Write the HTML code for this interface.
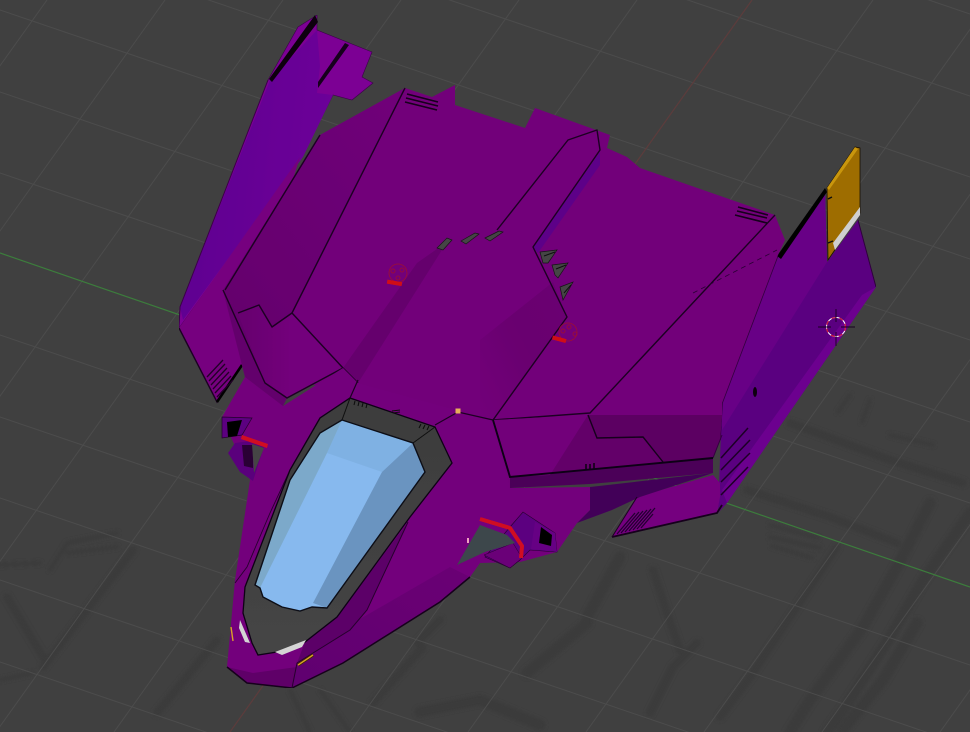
<!DOCTYPE html>
<html><head><meta charset="utf-8"><style>html,body{margin:0;padding:0;background:#404040}svg{display:block}</style></head><body>
<svg width="970" height="732" viewBox="0 0 970 732" xmlns="http://www.w3.org/2000/svg">
<defs>
<filter id="b" x="-5%" y="-5%" width="110%" height="110%"><feGaussianBlur stdDeviation="1.8"/></filter>
<filter id="s" x="0" y="0" width="100%" height="100%"><feGaussianBlur stdDeviation=".35"/></filter>
<linearGradient id="fin" x1="0" y1="0" x2="1" y2="0.2"><stop offset="0" stop-color="#5d0090"/><stop offset="1" stop-color="#6c0098"/></linearGradient>
<linearGradient id="pan" x1="0" y1="1" x2="1" y2="0"><stop offset="0" stop-color="#64006c"/><stop offset="1" stop-color="#70007a"/></linearGradient>
<linearGradient id="sub" x1="0" y1="0" x2="1" y2="0"><stop offset="0" stop-color="#66006e"/><stop offset=".5" stop-color="#73007b"/></linearGradient>
<linearGradient id="mid" x1="0" y1="1" x2="1" y2="0.2"><stop offset="0" stop-color="#72007a"/><stop offset=".6" stop-color="#69006f"/><stop offset="1" stop-color="#6a0072"/></linearGradient>
<linearGradient id="fr" x1="0" y1="0" x2="0" y2="1"><stop offset="0" stop-color="#3c3c3c"/><stop offset="1" stop-color="#454545"/></linearGradient>
<linearGradient id="low" x1="1" y1="0" x2="0" y2="1"><stop offset="0" stop-color="#6a0074"/><stop offset="1" stop-color="#600070"/></linearGradient>
</defs>
<rect width="970" height="732" fill="#404040"/>
<!-- floor marks -->
<g filter="url(#b)" fill="none" stroke="#3a3a3a" stroke-linecap="round" stroke-linejoin="round">
<g stroke-width="8"><polyline points="790,423 890,460 963,483"/><polyline points="747,490 830,517 897,543"/><polyline points="837,547 797,607 753,673 720,717"/><polyline points="653,570 667,613 680,650"/><polyline points="697,643 673,667 650,713"/><polyline points="133,550 43,667"/><polyline points="7,597 43,657"/><polyline points="217,640 157,713"/><polyline points="423,647 373,703"/><polyline points="440,620 417,643"/></g>
<g stroke-width="11"><polyline points="930,503 897,567 863,627 810,700 790,732"/><polyline points="970,513 923,580 890,637 843,710 827,732"/><polyline points="917,623 883,680 843,730"/><polyline points="587,623 527,673"/><polyline points="620,557 587,617"/><polyline points="420,712 480,700 540,725"/></g>
<g stroke-width="4"><polyline points="770,525 818,538"/><polyline points="770,537 820,548"/><polyline points="772,546 812,558"/><polyline points="890,435 933,445"/><polyline points="850,395 838,412"/><polyline points="870,400 862,422"/><polyline points="50,570 67,543 117,533"/><polyline points="67,553 117,547"/><polyline points="0,680 33,673"/><polyline points="0,565 40,563"/><polyline points="290,690 310,732"/><polyline points="320,690 350,732"/></g>
</g>
<!-- grid -->
<g stroke="#4c4c4c" stroke-width="1" fill="none">
<path d="M0-316L970 14M0-234L970 96M0-153L970 177M0-71L970 259M0 10L970 340M0 92L970 422M0 173L970 503M0 335L970 665M0 417L970 747M0 498L970 828M0 580L970 910M0 662L970 992"/>
<path d="M47 0L-476 732M165 0L-358 732M283 0L-240 732M401 0L-122 732M519 0L-4 732M637 0L114 732M873 0L350 732M991 0L468 732M1109 0L586 732M1227 0L704 732M1345 0L822 732M1463 0L940 732"/>
</g>
<path d="M0 253L970 587" stroke="#3c7d3c" stroke-width="1.2"/>
<path d="M752 0L230 732" stroke="#5c3c3c" stroke-width="1.2"/>

<g filter="url(#s)">
<!-- left fin -->
<polygon points="298,27 317,15 317,30 372,52 362,77 373,83 352,100 333,95 300,160 179,328 180,307 268,80" fill="#7c0094" stroke="#3a0048" stroke-width=".6"/>
<polygon points="270,80 317,30 320,66 317,93 333,95 303,157 183,320 180,307" fill="url(#fin)"/>
<polygon points="315,15 318,22 272,82 269,79" fill="#0a0010"/>
<polygon points="345,43 349,45 318,88 318,82" fill="#12001c"/>
<polyline points="268,80 180,307 179,328" fill="none" stroke="#3a0048" stroke-width="1"/>
<polygon points="179,328 300,157 255,300 242,365 217,402" fill="#76007f"/>
<polyline points="179,328 217,402 242,365" fill="none" stroke="#1c0024" stroke-width="1.4"/>
<polyline points="217,402 242,365" fill="none" stroke="#000" stroke-width="2.6"/>
<path d="M207 377L223 360M209 381L225 364M211 385L227 368M213 389L229 372M215 393L231 376M217 397L233 380" stroke="#200028" stroke-width="1.3"/>
<!-- right fin -->
<polygon points="778,255 825,190 827,262 858,220 876,287 727,503 718,513 722,403" fill="#5a0080"/>
<polygon points="778,255 825,190 827,262 722,430 722,403" fill="#680086"/>
<polygon points="876,287 862,295 722,490 727,503" fill="#6c008f"/>
<polyline points="858,220 876,287" stroke="#2e003c" stroke-width="1" fill="none"/>
<polyline points="778,255 722,403 720,440" stroke="#33003f" stroke-width="1.6" fill="none"/>
<ellipse cx="755" cy="392" rx="2" ry="5" fill="#0a0010"/>
<polygon points="777,256 825,188 827,192 781,259" fill="#040006"/>
<!-- gold -->
<polygon points="827,188 855,147 860,148 860,213 828,260" fill="#9e6d00" stroke="#1a1000" stroke-width=".8"/>
<polygon points="827,188 855,147 858,149 829,190" fill="#c9960a"/>
<polygon points="833,243 860,207 860,215 835,250" fill="#cfcfcf"/>
<path d="M828 199L832 197M828 243L833 241" stroke="#111" stroke-width="1.4"/>
<!-- main body -->
<polygon points="320,135 405,88 432,97 455,85 455,105 525,128 535,108 610,135 607,148 627,157 640,168 775,215 785,240 778,255 722,403 722,415 720,440 713,458 510,488 358,390 245,377 223,292" fill="#72007a"/>
<polygon points="320,135 405,88 292,313 272,327 259,305 238,313 223,290" fill="url(#pan)"/>
<polygon points="223,290 238,313 265,383 287,398 283,406 250,392 245,377" fill="#64006c"/>
<polygon points="238,313 259,305 272,327 292,313 343,368 287,398 265,383" fill="url(#sub)"/>
<polygon points="447,242 417,263 343,368 358,383" fill="#65006d"/>
<polygon points="480,340 553,282 567,317 493,420 480,420" fill="url(#mid)"/>
<polygon points="600,152 533,247 538,253 600,165" fill="#5d0088"/>
<!-- spine vents -->
<g fill="#454545" stroke="#151515" stroke-width=".7">
<polygon points="540,252 557,250 548,263 543,263"/><polygon points="552,265 568,263 558,278 555,275"/><polygon points="560,287 573,282 563,300"/>
<polygon points="437,248 447,238 452,240 443,250"/><polygon points="461,241 475,233 479,234 466,244"/><polygon points="485,238 499,231 503,232 490,241"/>
</g>
<path d="M544 256L555 252M556 269L566 265M564 293L571 285" stroke="#111" stroke-width="1"/>
<!-- lines on main -->
<g fill="none" stroke="#1c0022" stroke-width="1.4" stroke-linejoin="round">
<polyline points="405,88 292,313 343,368 358,383"/>
<polyline points="343,368 287,398 265,383 223,290"/>
<polyline points="238,313 259,305 272,327 292,313"/>
<polyline points="497,230 568,140 597,130 600,150 533,247 567,317 493,420"/>
<polyline points="320,135 225,290"/>
<polyline points="775,215 590,413 493,420"/>
</g>
<path d="M693 293L777 250" stroke="#2a0034" stroke-width=".8" stroke-dasharray="5 4"/>
<path d="M407 94L438 102M406 98L438 106M405 102L437 110" stroke="#14001a" stroke-width="1.6"/>
<path d="M738 207L768 215M737 211L767 218M735 215L767 223" stroke="#14001a" stroke-width="1.6"/>
<!-- marks -->
<g fill="none" stroke="#a01030" stroke-width=".8"><circle cx="398" cy="273" r="9"/><circle cx="393" cy="271" r="2"/><circle cx="402" cy="270" r="2"/><circle cx="398" cy="278" r="2"/><circle cx="568" cy="332" r="9"/><circle cx="563" cy="331" r="2"/><circle cx="575" cy="334" r="2"/><circle cx="569" cy="327" r="2"/></g>
<rect x="387" y="281" width="15" height="4" fill="#d01018" transform="rotate(10 395 283)"/>
<rect x="552" y="337" width="14" height="4" fill="#d01018" transform="rotate(15 558 340)"/>
<!-- rear right -->
<polygon points="588,415 722,415 720,440 713,458 663,462 643,437 597,438" fill="#5b0062"/>
<polygon points="588,415 597,438 643,437 663,462 547,475" fill="#630069"/>
<polygon points="612,537 637,497 713,475 720,483 720,497 717,513" fill="#75007f"/>
<polygon points="590,487 590,510 577,523 612,510 640,497 713,473" fill="#430059"/>
<polygon points="510,477 713,458 713,473 590,484 510,488" fill="#4b0058"/>
<polyline points="612,537 717,513 722,505" fill="none" stroke="#14001a" stroke-width="1.8"/>
<polyline points="612,537 637,497" fill="none" stroke="#1a0022" stroke-width="1"/>
<path d="M617 534L635 513M621 533L639 512M625 532L643 511M629 531L647 510M633 530L651 509M637 529L655 508M641 528L653 514" stroke="#240030" stroke-width="1.3"/>
<path d="M721 458L748 428M721 470L750 440M721 482L750 453M721 495L748 467" stroke="#1c0026" stroke-width="1.5"/>
<polyline points="713,458 722,435" stroke="#33003f" stroke-width="1" fill="none"/>
<!-- nose base -->
<polygon points="222,417 245,377 283,406 343,368 358,383 493,420 510,488 590,487 590,510 577,523 557,552 520,562 480,563 470,577 440,602 343,663 292,688 247,683 227,667 235,580 250,480" fill="#73007b"/>
<polygon points="450,567 470,577 440,602 343,663 292,688 293,670 353,623" fill="url(#low)"/>
<polygon points="408,522 337,617 305,642 297,663 350,630 367,610" fill="#5c0068"/>
<polygon points="227,667 247,683 292,688 297,667 253,673" fill="#5f0068"/>
<polyline points="227,667 247,683 292,688 343,663 440,602 470,577" fill="none" stroke="#14001a" stroke-width="1.5"/>
<polyline points="408,522 367,610 350,630 297,663 292,688" fill="none" stroke="#28002f" stroke-width="1"/>
<polyline points="235,583 247,567 270,513 290,470" fill="none" stroke="#28002f" stroke-width=".9"/>
<!-- panel right of nose -->
<polygon points="493,420 588,415 550,475 510,477" fill="#72007a"/>
<polyline points="588,415 597,438 643,437 663,462" fill="none" stroke="#14001a" stroke-width="1.4"/>
<polyline points="493,420 510,477 713,458" fill="none" stroke="#0e0012" stroke-width="1.9"/>
<path d="M586 464L586 470M590 464L590 470M594 463L594 469" stroke="#100014" stroke-width="1.6"/>
<polyline points="435,425 458,412 493,420" fill="none" stroke="#1c0022" stroke-width="1.2"/>
<rect x="455.500" y="408.500" width="5" height="5" fill="#e6ae5a"/>
<!-- left engine -->
<polygon points="222,417 252,418 242,435 222,438" fill="#5c0080" stroke="#24002c" stroke-width=".7"/>
<polygon points="227,422 242,420 237,436 228,437" fill="#000"/>
<path d="M228 453L235 443L250 441L264 447L253 481L240 472Z" fill="#5a007c"/>
<polygon points="242,445 253,445 253,468 244,466" fill="#2a0034"/>
<polygon points="252,444 264,448 254,473" fill="#444"/>
<polygon points="242,435 268,444 267,448 241,439" fill="#d01020"/>
<!-- right engine -->
<polygon points="510,527 523,512 555,533 557,552 530,550 520,560 510,568 485,557" fill="#5c0080" stroke="#25002e" stroke-width=".6"/>
<polygon points="535,522 555,533 557,552 531,549" fill="#660084"/>
<polygon points="541,527 552,535 551,546 539,543" fill="#000"/>
<polygon points="484,555 513,543 522,558 510,568" fill="#6a0078" stroke="#25002e" stroke-width=".5"/>
<polygon points="457,565 480,525 507,535 515,543 485,552" fill="#3e464c"/>
<polyline points="480,519 510,528 522,546 521,558" fill="none" stroke="#d01020" stroke-width="4" stroke-linejoin="round"/>
<rect x="467" y="538" width="2" height="5" fill="#f0a0c0"/>
<!-- canopy frame -->
<polygon points="350,398 435,427 452,463 410,517 337,617 305,642 277,652 258,655 252,643 243,613 245,587 290,470 320,418" fill="url(#fr)" stroke="#0e0012" stroke-width="1.3"/>
<polyline points="342,420 350,398" stroke="#111" stroke-width="1" fill="none"/>
<polyline points="413,443 435,427" stroke="#111" stroke-width="1" fill="none"/>
<polyline points="358,380 350,398" stroke="#1c0022" stroke-width="1.2" fill="none"/>
<!-- canopy -->
<polygon points="342,420 413,443 425,472 327,608 312,607 300,611 282,607 263,597 260,588 255,585 290,480 320,433" fill="#87b9ee"/>
<polygon points="342,420 413,443 382,472 327,453" fill="#7fb1e3"/>
<polygon points="320,433 342,420 327,453 260,588 255,585 290,480" fill="#7ca9ca"/>
<polygon points="413,443 425,472 327,608 313,603 382,472" fill="#6b94c0"/>
<polygon points="342,420 413,443 425,472 327,608 312,607 300,611 282,607 263,597 260,588 255,585 290,480 320,433" fill="none" stroke="#0c1018" stroke-width="1.4"/>
<!-- details -->
<path d="M355 401L354 405M359 402L358 406M363 403L362 407M367 404L366 408" stroke="#0c0c0c" stroke-width="1"/>
<path d="M392 411L400 410M393 413L400 412" stroke="#111" stroke-width="1"/>
<path d="M421 424L419 428M425 425L423 429M429 426L427 430" stroke="#0c0c0c" stroke-width="1"/>
<polygon points="240,620 250,643 245,642 239,628" fill="#d4d4d4"/>
<polygon points="275,652 306,640 302,647 282,655" fill="#d4d4d4"/>
<line x1="298" y1="665" x2="313" y2="655" stroke="#3a2a00" stroke-width="3"/>
<line x1="298" y1="665" x2="313" y2="655" stroke="#d9a02a" stroke-width="1.4"/>
<path d="M231 627L233 641" stroke="#d9a02a" stroke-width="1.4"/>
</g>
<!-- cursor -->
<circle cx="836" cy="327" r="9.500" fill="none" stroke="#fff" stroke-width="1"/>
<circle cx="836" cy="327" r="9.500" fill="none" stroke="#d01030" stroke-width="1.1" stroke-dasharray="4 4"/>
<path d="M818 327H831M841 327H855M836 309V322M836 332V346" stroke="#180020" stroke-width=".9"/>
</svg>
</body></html>
